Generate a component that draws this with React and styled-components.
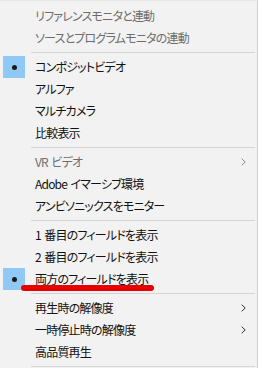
import React from "react";
import styled, { createGlobalStyle } from "styled-components";

const Global = createGlobalStyle`
  html, body { margin: 0; padding: 0; background: #f2f2f2; }
  #root { width: 258px; height: 368px; overflow: hidden; }
`;

const Menu = styled.div`
  position: relative;
  box-sizing: border-box;
  width: 258px;
  height: 368px;
  padding-top: 4px;
  background: #f2f2f2;
  border-right: 1px solid #cfcfcf;
  border-top: 1px solid #e6e6e6;
  font-family: "Noto Sans CJK JP", "Noto Sans", sans-serif;
  font-size: 12px;
  font-feature-settings: "palt";
  letter-spacing: -0.8px;
  word-spacing: 1.5px;
  overflow: hidden;
`;

const Row = styled.div`
  display: flex;
  align-items: center;
  height: 22px;
  color: ${(p) => (p.$disabled ? "#6d6d6d" : "#111")};
`;

const CheckCell = styled.div`
  display: flex;
  align-items: center;
  justify-content: center;
  width: 22px;
  height: 22px;
  margin-left: 3px;
  margin-right: 10px;
  background: ${(p) => (p.$checked ? "#90c8f6" : "transparent")};
`;

const Dot = styled.span`
  width: 5px;
  height: 5px;
  border-radius: 50%;
  background: #1a1a1a;
`;

const Label = styled.span`
  flex: 1;
  white-space: nowrap;
  line-height: 22px;
  margin-top: -1px;
`;

const Arrow = styled.svg`
  width: 5px;
  height: 8px;
  margin-right: 11px;
  flex: none;
`;

const Separator = styled.div`
  height: 7px;
  display: flex;
  align-items: center;
  padding-left: 31px;
  padding-right: 2px;
  &::after {
    content: "";
    flex: 1;
    height: 1px;
    background: #d4d4d4;
  }
`;

const Mark = styled.div`
  position: absolute;
  left: 21px;
  top: 284px;
  width: 133px;
  height: 6px;
  border-radius: 3px;
  background: #e80000;
`;

const items = [
  { t: "リファレンスモニタと連動", d: true },
  { t: "ソースとプログラムモニタの連動", d: true },
  "sep",
  { t: "コンポジットビデオ", c: true },
  { t: "アルファ" },
  { t: "マルチカメラ" },
  { t: "比較表示" },
  "sep",
  { t: "VR ビデオ", d: true, sub: true },
  { t: "Adobe イマーシブ環境" },
  { t: "アンビソニックスをモニター" },
  "sep",
  { t: "1 番目のフィールドを表示" },
  { t: "2 番目のフィールドを表示" },
  { t: "両方のフィールドを表示", c: true },
  "sep",
  { t: "再生時の解像度", sub: true },
  { t: "一時停止時の解像度", sub: true },
  { t: "高品質再生" },
  "sep",
];

export default function App() {
  return (
    <>
      <Global />
      <Menu>
        {items.map((it, i) =>
          it === "sep" ? (
            <Separator key={i} />
          ) : (
            <Row key={i} $disabled={it.d}>
              <CheckCell $checked={it.c}>{it.c && <Dot />}</CheckCell>
              <Label>{it.t}</Label>
              {it.sub && (
                <Arrow viewBox="0 0 5 8">
                  <path
                    d="M0.7 0.7 L4.2 4 L0.7 7.3"
                    fill="none"
                    stroke={it.d ? "#8a8a8a" : "#333"}
                    strokeWidth="1"
                  />
                </Arrow>
              )}
            </Row>
          )
        )}
        <Mark />
      </Menu>
    </>
  );
}
